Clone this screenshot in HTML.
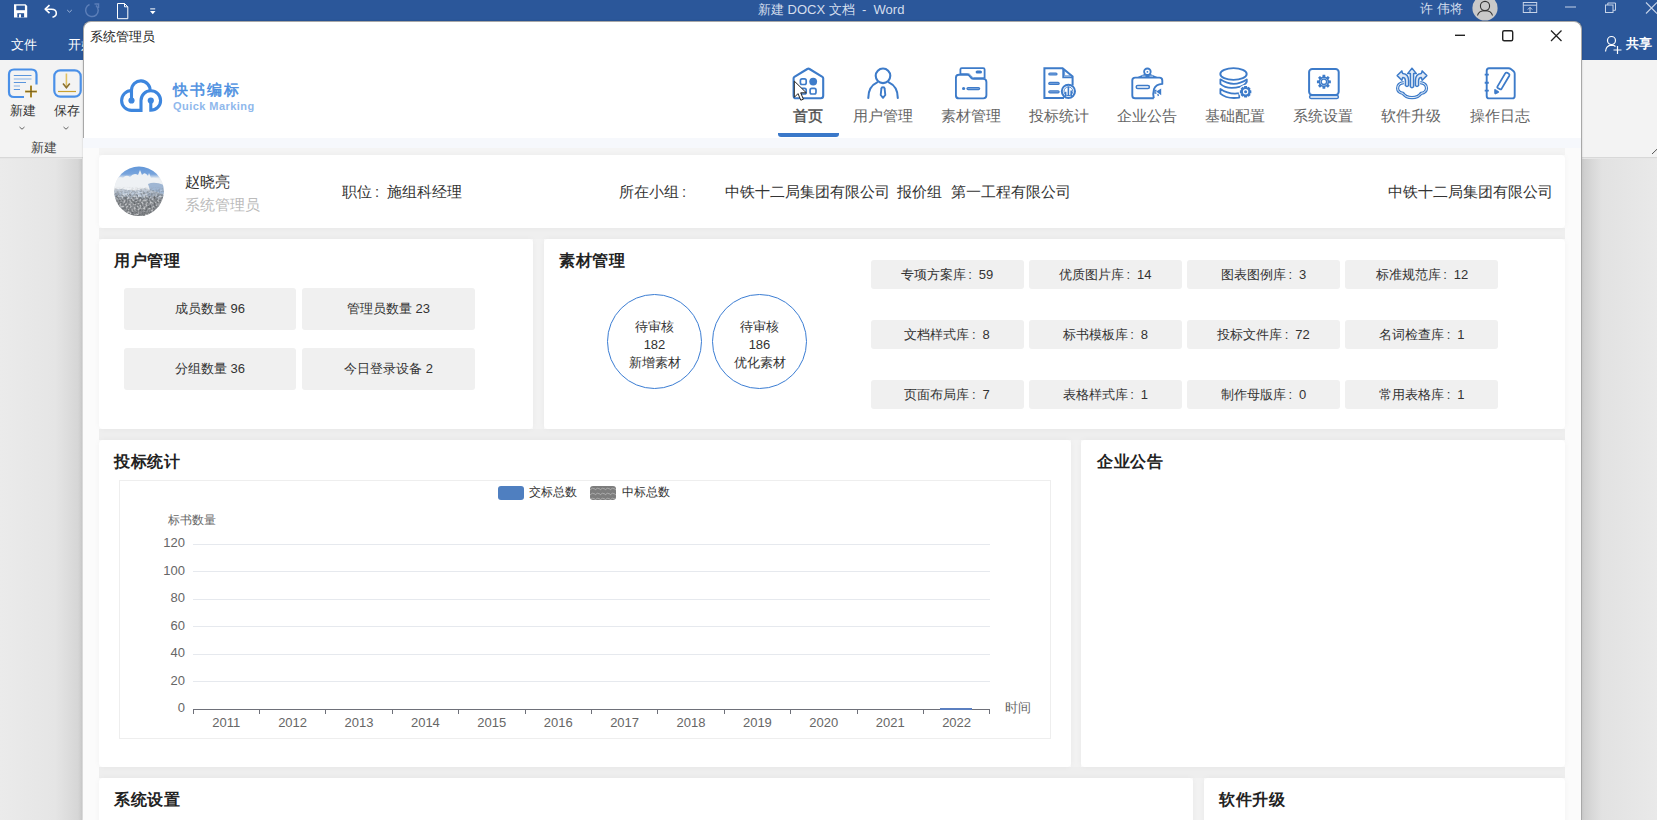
<!DOCTYPE html>
<html><head><meta charset="utf-8">
<style>
*{margin:0;padding:0;box-sizing:border-box}
html,body{width:1657px;height:820px;overflow:hidden;background:#e6e6e6;font-family:"Liberation Sans",sans-serif;position:relative}
.abs{position:absolute}
.t{position:absolute;white-space:nowrap;line-height:1}
.card{position:absolute;background:#fff;border-radius:4px;box-shadow:0 0 6px rgba(0,0,0,.04)}
.ttl{position:absolute;font-size:16px;font-weight:bold;color:#222;letter-spacing:0.6px;line-height:1;white-space:nowrap}
.cl{display:inline-block;text-align:left;width:13px;padding-left:2.5px}
.sb{position:absolute;background:#f0f0f0;border-radius:3px;font-size:13px;color:#333;text-align:center;white-space:nowrap}
</style></head><body>
<!-- word chrome -->
<div class="abs" style="left:0;top:0;width:1657px;height:60px;background:#2b579a"></div>
<div class="abs" style="left:0;top:60px;width:1657px;height:98px;background:#f3f3f3;border-bottom:1px solid #d8d8d8"></div>
<div class="abs" style="left:0;top:159px;width:1657px;height:661px;background:linear-gradient(90deg,#ebebeb 0,#e5e5e5 55px,#d6d6d6 78px,#c9c9c9 82px,#e6e6e6 82px,#e6e6e6 1581px,#cdcdcd 1583px,#d8d8d8 1592px,#e2e2e2 1602px,#e9e9e9 1657px)"></div>
<svg class="abs" style="left:0;top:0" width="170" height="22" viewBox="0 0 170 22">
<path d="M14 4.2 H25.5 L27.2 5.9 V17.4 H14 Z" fill="#fff"/>
<rect x="16.3" y="5.6" width="8.6" height="4.6" fill="#2b579a"/>
<rect x="17.3" y="13.2" width="6.8" height="4.2" fill="#2b579a"/>
<rect x="19" y="14.3" width="2" height="3.1" fill="#fff"/>
<path d="M49.5 5.2 L45.2 9.2 L49.5 13.2" fill="none" stroke="#fff" stroke-width="1.6" stroke-linejoin="round"/>
<path d="M45.5 9.2 H51.5 Q56.3 9.2 56.3 13.2 Q56.3 16.3 52.5 17.2" fill="none" stroke="#fff" stroke-width="1.6"/>
<path d="M67.2 10 L69.5 12.2 L71.8 10" fill="none" stroke="#9db4d8" stroke-width="1"/>
<path d="M96 5.5 A6.3 6.3 0 1 1 89.5 4.5" fill="none" stroke="#5b7eb8" stroke-width="1.5"/>
<path d="M94.5 4 H98.5 V8" fill="none" stroke="#5b7eb8" stroke-width="1.5"/>
<path d="M117.5 3.5 H124.5 L127.8 6.8 V18.7 H117.5 Z M124.5 3.5 V6.8 H127.8" fill="none" stroke="#fff" stroke-width="1"/>
<path d="M150.2 8.9 H155.2" stroke="#fff" stroke-width="1"/>
<path d="M150 11 H155.5 L152.75 14.2 Z" fill="#fff"/>
</svg>
<svg class="abs" style="left:1460px;top:0" width="197" height="22" viewBox="0 0 197 22">
<circle cx="25" cy="8" r="12.6" fill="#c9c9c9"/>
<circle cx="25" cy="6" r="4.6" fill="none" stroke="#333" stroke-width="1.1"/>
<path d="M17.5 15.5 Q18.5 10.8 25 10.8 Q31.5 10.8 32.5 15.5" fill="none" stroke="#333" stroke-width="1.1"/>
<rect x="63.3" y="2.5" width="13.4" height="10" fill="none" stroke="#c6d3e8" stroke-width="1"/>
<path d="M63.3 5.2 H76.7 M70 12.5 V7.5 M67.8 9.6 L70 7.3 L72.2 9.6" fill="none" stroke="#c6d3e8" stroke-width="1"/>
<path d="M105 7 H116" stroke="#c6d3e8" stroke-width="1"/>
<rect x="145.5" y="5" width="7.5" height="7.5" fill="none" stroke="#c6d3e8" stroke-width="1"/>
<path d="M147.8 5 V3 H155.5 V10.3 H153" fill="none" stroke="#c6d3e8" stroke-width="1"/>
<path d="M186 2.5 L197 13.5 M197 2.5 L186 13.5" stroke="#c6d3e8" stroke-width="1.1"/>
</svg>
<svg class="abs" style="left:1600px;top:33px" width="25" height="22" viewBox="0 0 25 22">
<circle cx="11.5" cy="7.5" r="4" fill="none" stroke="#fff" stroke-width="1.2"/>
<path d="M5.5 18.5 Q6 12.5 11.5 12.2 Q14 12.2 15.5 13.5" fill="none" stroke="#fff" stroke-width="1.2"/>
<path d="M17.5 13 V21 M13.5 17 H21.5" stroke="#fff" stroke-width="1.2"/>
</svg>
<svg class="abs" style="left:5px;top:65px" width="80" height="70" viewBox="0 0 80 70">
<path d="M31.5 19.5 V9.5 Q31.5 4.5 26.5 4.5 H9 Q4 4.5 4 9.5 V27 Q4 32 9 32 H19" fill="none" stroke="#4a90e8" stroke-width="2.2"/>
<path d="M8.8 10.5 H26.5 M8.8 17.5 H21 M8.8 24.5 H15" stroke="#5a95dc" stroke-width="1"/>
<path d="M8.8 14 H26.5 M8.8 21 H15" stroke="#aac8ec" stroke-width="1.5"/>
<path d="M20 26.6 H32 M26 20.5 V32.5" stroke="#c8a030" stroke-width="2"/>
<path d="M20.5 26.6 H31.5 M26 21 V32" stroke="#5a4a20" stroke-width="0.7"/>
<rect x="49.3" y="5.3" width="26.4" height="26.4" rx="6" fill="none" stroke="#4a90e8" stroke-width="2.2"/>
<path d="M61.4 8.5 V22.5" stroke="#e0c060" stroke-width="1.6"/>
<path d="M58 18.5 L61.4 22.8 L64.8 18.5" fill="none" stroke="#8a7030" stroke-width="1.6"/>
<path d="M53 26.5 H71" stroke="#c8a030" stroke-width="1.2"/>
<path d="M14.5 62 L17 64.2 L19.5 62 M58.5 62 L61 64.2 L63.5 62" fill="none" stroke="#555" stroke-width="0.9"/>
</svg>
<div class="t" style="left:758px;top:3px;font-size:13px;color:#d4deed">新建 DOCX 文档 &nbsp;- &nbsp;Word</div>
<div class="t" style="left:11px;top:38px;font-size:13px;color:#fff">文件</div>
<div class="t" style="left:68px;top:38px;font-size:13px;color:#fff">开始</div>
<div class="t" style="left:1626px;top:37px;font-size:13px;color:#fff;font-weight:bold">共享</div>
<div class="t" style="left:10px;top:104px;font-size:13px;color:#333">新建</div>
<div class="t" style="left:54px;top:104px;font-size:13px;color:#333">保存</div>
<div class="t" style="left:31px;top:141px;font-size:13px;color:#444">新建</div>
<div class="t" style="left:1420px;top:2px;font-size:13px;color:#d4deed">许 伟将</div>

<!-- dialog -->
<div class="abs" style="left:82.5px;top:21px;width:1499px;height:799px;background:#fff;border-radius:8px 8px 0 0;border:1px solid #a8a8a8;border-bottom:0;box-shadow:0 0 2px rgba(0,0,0,.2)"></div>
<div class="t" style="left:90px;top:31px;font-size:12.5px;color:#222">系统管理员</div>
<svg class="abs" style="left:1450px;top:27px" width="120" height="18" viewBox="0 0 120 18">
<path d="M5 8.3 H15" stroke="#222" stroke-width="1.4"/>
<rect x="52.7" y="3.7" width="10" height="10" rx="1.5" fill="none" stroke="#222" stroke-width="1.4"/>
<path d="M101 3.5 L111.5 14 M111.5 3.5 L101 14" stroke="#222" stroke-width="1.3"/>
</svg>
<svg class="abs" style="left:115px;top:74px" width="55" height="42" viewBox="0 0 55 42">
<g fill="none" stroke="#3d86de" stroke-width="3.1">
<path d="M16.5 26.5 V15.9 A9.3 9.3 0 0 1 35.1 16.5"/>
<path d="M16.5 16.6 A9.9 9.9 0 0 0 16.5 36.4 H26 V26.5 A9.8 9.8 0 1 1 35.8 36.3 V26.5"/>
</g>
<circle cx="16.5" cy="26.5" r="3.1" fill="#3d86de"/><circle cx="35.8" cy="26.5" r="3.1" fill="#3d86de"/>
</svg>
<div class="t" style="left:173px;top:82px;font-size:15px;color:#4a8ee0;-webkit-text-stroke:0.5px #4a8ee0;letter-spacing:2px">快书编标</div>
<div class="t" style="left:173px;top:101px;font-size:11px;color:#8fb8ec;letter-spacing:0.45px;font-weight:bold">Quick Marking</div>
<svg class="abs" style="left:792px;top:67px" width="33" height="33" viewBox="0 0 33 33"><path d="M1.6 11.2 Q1.6 10.4 2.4 9.9 L15.3 2 Q16.4 1.3 17.5 2 L30.4 9.9 Q31.2 10.4 31.2 11.2 V28.8 Q31.2 31.3 28.8 31.3 H4 Q1.6 31.3 1.6 28.8 Z" fill="none" stroke="#3d7bc9" stroke-width="2.1" stroke-linejoin="round"/>
<rect x="8.4" y="11.9" width="5.8" height="5.6" rx="1.7" fill="none" stroke="#3d7bc9" stroke-width="1.7"/>
<circle cx="21.2" cy="14.6" r="3.9" fill="#3d7bc9"/>
<rect x="8.4" y="21.4" width="5.8" height="5.6" rx="1.7" fill="none" stroke="#3d7bc9" stroke-width="1.7"/>
<rect x="18.1" y="21.4" width="5.9" height="5.6" rx="1.7" fill="none" stroke="#3d7bc9" stroke-width="1.7"/></svg>
<div class="t" style="left:708px;top:109px;width:200px;text-align:center;font-size:14.5px;color:#505050;-webkit-text-stroke:0.45px #505050">首页</div>
<svg class="abs" style="left:867px;top:67px" width="33" height="33" viewBox="0 0 33 33"><circle cx="16" cy="8.8" r="7.3" fill="none" stroke="#3d7bc9" stroke-width="2.1"/>
<path d="M1.3 31 C1.3 23.5 4.5 18 10.2 15.4 M21.8 15.4 C27.5 18 30.8 23.5 30.8 31" fill="none" stroke="#3d7bc9" stroke-width="2.1" stroke-linecap="round"/>
<path d="M14.4 21.4 Q14.4 20.3 16 20.3 Q17.6 20.3 17.6 21.4 L18.3 28 L16 30.8 L13.7 28 Z" fill="none" stroke="#3d7bc9" stroke-width="1.9" stroke-linejoin="round"/></svg>
<div class="t" style="left:783px;top:109px;width:200px;text-align:center;font-size:14.5px;color:#666">用户管理</div>
<svg class="abs" style="left:955px;top:67px" width="33" height="33" viewBox="0 0 33 33"><path d="M5.4 8 V2.6 Q5.4 1.2 6.8 1.2 H28.2 Q29.6 1.2 29.6 2.6 V11.5" fill="none" stroke="#3d7bc9" stroke-width="1.8"/>
<rect x="20.6" y="3.4" width="6.4" height="3.2" rx="1.6" fill="#3d7bc9"/>
<path d="M0.9 11 Q0.9 7.8 4 7.8 H12.5 Q13.8 7.8 15 9.5 L16.2 10.9 Q17 11.9 18.5 11.9 H28.2 Q31.4 11.9 31.4 15 V28.3 Q31.4 31.4 28.3 31.4 H4 Q0.9 31.4 0.9 28.3 Z" fill="none" stroke="#3d7bc9" stroke-width="1.9"/>
<path d="M5.6 6.6 H12.8 Q14.5 6.6 15.8 8.4 L17 10 Q17.6 10.6 18.6 10.6 H29" fill="none" stroke="#3d7bc9" stroke-width="0.8"/>
<circle cx="8.6" cy="21.5" r="1.6" fill="#3d7bc9"/>
<rect x="11.4" y="19.9" width="13.8" height="3.3" rx="1.65" fill="#3d7bc9"/>
<path d="M12.8 21.5 H23.8" stroke="#8fb3e3" stroke-width="0.7"/></svg>
<div class="t" style="left:871px;top:109px;width:200px;text-align:center;font-size:14.5px;color:#666">素材管理</div>
<svg class="abs" style="left:1043px;top:67px" width="33" height="33" viewBox="0 0 33 33"><path d="M21 31 H1.4 V1.2 H19.6 L29.6 9.4 V18.5" fill="none" stroke="#3d7bc9" stroke-width="2" stroke-linejoin="miter"/>
<path d="M20.2 1.8 V10.3 H29.2" fill="none" stroke="#3d7bc9" stroke-width="1.8"/>
<path d="M21.6 3.5 V8.8 H27" fill="none" stroke="#3d7bc9" stroke-width="0.8"/>
<rect x="5.2" y="5.4" width="9.4" height="3.2" rx="1.6" fill="#3d7bc9"/>
<rect x="5.2" y="14.8" width="11.5" height="3.2" rx="1.6" fill="#3d7bc9"/>
<rect x="5.2" y="23.2" width="11.5" height="3.2" rx="1.6" fill="#3d7bc9"/>
<path d="M6.5 7 H13.5 M6.5 16.4 H15.5 M6.5 24.8 H15.5" stroke="#8fb3e3" stroke-width="0.7"/>
<circle cx="25.4" cy="24.3" r="7.4" fill="#fff"/>
<circle cx="25.4" cy="24.3" r="6.6" fill="none" stroke="#3d7bc9" stroke-width="2"/>
<circle cx="25.4" cy="24.3" r="4.4" fill="none" stroke="#3d7bc9" stroke-width="0.9"/>
<path d="M22.6 29 V24.8 M25.4 29 V19.6 M28.2 29 V23.6" stroke="#3d7bc9" stroke-width="1.6"/></svg>
<div class="t" style="left:959px;top:109px;width:200px;text-align:center;font-size:14.5px;color:#666">投标统计</div>
<svg class="abs" style="left:1131px;top:67px" width="33" height="33" viewBox="0 0 33 33"><circle cx="16.4" cy="4.8" r="3.3" fill="none" stroke="#3d7bc9" stroke-width="1.8"/>
<circle cx="16.4" cy="4.8" r="0.9" fill="#3d7bc9"/>
<path d="M13.4 7 L5.5 10.6 H27.5 L19.4 7 Z" fill="#3d7bc9"/>
<path d="M11 9.2 H14.5 M18.5 9.2 H22" stroke="#fff" stroke-width="0.8"/>
<path d="M22.8 31.3 H4.2 Q1.3 31.3 1.3 28.4 V13.4 Q1.3 10.6 4.2 10.6 H28.4 Q31.3 10.6 31.3 13.4 V16.9 Q25 17.2 23 22 Q21.6 27 22.8 31.3" fill="none" stroke="#3d7bc9" stroke-width="1.9" stroke-linejoin="round"/>
<rect x="5.2" y="18.6" width="13.2" height="3" rx="1.5" fill="none" stroke="#3d7bc9" stroke-width="1.5"/>
<path d="M25.2 24.6 L30.2 21.6 V28.2 Z" fill="#3d7bc9"/>
<path d="M25.5 23.5 H24 V26.2 H25.5 M26.8 26.8 L27.4 29" stroke="#3d7bc9" stroke-width="1.3" fill="none"/></svg>
<div class="t" style="left:1047px;top:109px;width:200px;text-align:center;font-size:14.5px;color:#666">企业公告</div>
<svg class="abs" style="left:1219px;top:67px" width="33" height="33" viewBox="0 0 33 33"><ellipse cx="14.5" cy="7" rx="13.2" ry="5.9" fill="none" stroke="#3d7bc9" stroke-width="1.9"/>
<path d="M1.4 12.3 Q14.6 21.2 27.8 12.5 V14.8 Q26 18.3 21.5 19.6 Q8 23.2 1.4 16.9 Z" fill="none" stroke="#3d7bc9" stroke-width="1.8" stroke-linejoin="round"/>
<path d="M1.4 21.9 Q10 27.8 20.3 26.2 V30.6 Q8 32.3 1.4 26.6 Z" fill="none" stroke="#3d7bc9" stroke-width="1.8" stroke-linejoin="round"/>
<circle cx="26.6" cy="24.8" r="7" fill="#fff"/>
<path d="M32.34 23.42 L32.34 26.18 L30.99 26.49 L30.90 26.70 L31.63 27.88 L29.68 29.83 L28.50 29.10 L28.29 29.19 L27.98 30.54 L25.22 30.54 L24.91 29.19 L24.70 29.10 L23.52 29.83 L21.57 27.88 L22.30 26.70 L22.21 26.49 L20.86 26.18 L20.86 23.42 L22.21 23.11 L22.30 22.90 L21.57 21.72 L23.52 19.77 L24.70 20.50 L24.91 20.41 L25.22 19.06 L27.98 19.06 L28.29 20.41 L28.50 20.50 L29.68 19.77 L31.63 21.72 L30.90 22.90 L30.99 23.11 Z" fill="#3d7bc9"/>
<circle cx="26.6" cy="24.8" r="2.7" fill="#fff"/><circle cx="26.6" cy="24.8" r="1.5" fill="#3d7bc9"/></svg>
<div class="t" style="left:1135px;top:109px;width:200px;text-align:center;font-size:14.5px;color:#666">基础配置</div>
<svg class="abs" style="left:1307px;top:67px" width="33" height="33" viewBox="0 0 33 33"><rect x="2.1" y="1.9" width="29.6" height="26" rx="3.2" fill="none" stroke="#3d7bc9" stroke-width="2"/>
<rect x="2.6" y="28.6" width="28.8" height="2.8" rx="1.4" fill="none" stroke="#3d7bc9" stroke-width="1.5"/>
<path d="M23.87 13.47 L23.87 16.13 L21.88 16.31 L21.49 17.25 L22.77 18.79 L20.89 20.67 L19.35 19.39 L18.41 19.78 L18.23 21.77 L15.57 21.77 L15.39 19.78 L14.45 19.39 L12.91 20.67 L11.03 18.79 L12.31 17.25 L11.92 16.31 L9.93 16.13 L9.93 13.47 L11.92 13.29 L12.31 12.35 L11.03 10.81 L12.91 8.93 L14.45 10.21 L15.39 9.82 L15.57 7.83 L18.23 7.83 L18.41 9.82 L19.35 10.21 L20.89 8.93 L22.77 10.81 L21.49 12.35 L21.88 13.29 Z" fill="#3d7bc9"/>
<circle cx="16.9" cy="14.8" r="3.6" fill="#fff"/><circle cx="16.9" cy="14.8" r="2.7" fill="none" stroke="#3d7bc9" stroke-width="1.3"/></svg>
<div class="t" style="left:1223px;top:109px;width:200px;text-align:center;font-size:14.5px;color:#666">系统设置</div>
<svg class="abs" style="left:1396px;top:67px" width="33" height="33" viewBox="0 0 33 33"><path d="M7.8 15.6 Q1.6 16.2 1.6 21.3 Q1.7 25.5 7 26.4 Q9.5 30.6 16 30.6 Q22.5 30.6 25 26.4 Q30.4 25.5 30.5 21.2 Q30.5 16.3 24.2 15.6" fill="none" stroke="#3d7bc9" stroke-width="3.2"/>
<path d="M7.8 15.6 Q1.6 16.2 1.6 21.3 Q1.7 25.5 7 26.4 Q9.5 30.6 16 30.6 Q22.5 30.6 25 26.4 Q30.4 25.5 30.5 21.2 Q30.5 16.3 24.2 15.6" fill="none" stroke="#fff" stroke-width="0.9"/>
<path d="M16 1.2 L11.6 6.6 H14.4 V19.8 Q16 21.6 17.6 19.8 V6.6 H20.4 Z" fill="#dfe9f6" stroke="#3d7bc9" stroke-width="1.5" stroke-linejoin="round"/>
<path d="M1.2 8.6 L5.8 3.9 L6.7 6.6 Q12.6 7.2 12.6 13.5 V18.6 Q11 20.3 9.4 18.6 V13.5 Q9.4 10.4 6.7 10.4 L5.8 13.2 Z" fill="#dfe9f6" stroke="#3d7bc9" stroke-width="1.5" stroke-linejoin="round"/>
<path d="M30.8 8.6 L26.2 3.9 L25.3 6.6 Q19.4 7.2 19.4 13.5 V18.6 Q21 20.3 22.6 18.6 V13.5 Q22.6 10.4 25.3 10.4 L26.2 13.2 Z" fill="#dfe9f6" stroke="#3d7bc9" stroke-width="1.5" stroke-linejoin="round"/></svg>
<div class="t" style="left:1311px;top:109px;width:200px;text-align:center;font-size:14.5px;color:#666">软件升级</div>
<svg class="abs" style="left:1484px;top:67px" width="33" height="33" viewBox="0 0 33 33"><path d="M5 1.3 H24.5 Q26 1.3 27.2 2.2 L29.6 4.2 Q30.7 5.2 30.7 6.8 V28.9 Q30.7 31.4 28.2 31.4 H5.2 Q2.7 31.4 2.7 28.9 V3.8 Q2.7 1.3 5 1.3 Z" fill="none" stroke="#3d7bc9" stroke-width="1.9" stroke-linejoin="round"/>
<path d="M0.7 7.6 H4.8 M0.7 15.7 H4.8 M0.7 23.6 H4.8" stroke="#3d7bc9" stroke-width="1.9"/>
<path d="M13.4 19.6 L21.2 6.4 Q22 5.2 23.3 5.8 L24.8 6.7 Q25.9 7.5 25.3 8.7 L17.5 21.9 Q16.9 22.7 16 22.3 L13.8 21 Q13 20.5 13.4 19.6 Z" fill="none" stroke="#3d7bc9" stroke-width="1.8" stroke-linejoin="round"/>
<path d="M10.6 23.2 Q10.3 22.3 11.1 22.4 L14.6 24.6 Q15.1 25.1 14.5 25.5 L11.5 26.9 Q10.7 27.2 10.7 26.3 Z" fill="#3d7bc9" stroke="#3d7bc9" stroke-width="0.8"/></svg>
<div class="t" style="left:1400px;top:109px;width:200px;text-align:center;font-size:14.5px;color:#666">操作日志</div>
<div class="abs" style="left:778px;top:133px;width:61px;height:4px;background:#3a78c9;border-radius:0 0 3px 3px"></div>
<svg class="abs" style="left:793px;top:80px" width="16" height="22" viewBox="0 0 16 22"><path d="M1.3 1.1 V17.3 L5 13.6 L7.8 20.2 L10.4 19.2 L7.7 12.8 H13.3 Z" fill="#fff" stroke="#222" stroke-width="1" stroke-linejoin="round"/></svg>

<!-- content bg -->
<div class="abs" style="left:83px;top:138px;width:1498px;height:682px;background:#fbfbfb"></div>
<div class="abs" style="left:83px;top:138px;width:1498px;height:10px;background:#f6f8fc"></div>
<div class="abs" style="left:99px;top:148px;width:1466px;height:7px;background:#f4f4f4"></div>
<div class="abs" style="left:99px;top:228px;width:1466px;height:11px;background:#efefef"></div>
<div class="abs" style="left:99px;top:429px;width:1466px;height:11px;background:#eeeeee"></div>
<div class="abs" style="left:99px;top:767px;width:1466px;height:11px;background:#eeeeee"></div>
<div class="abs" style="left:533px;top:239px;width:11px;height:190px;background:#f2f2f2"></div>
<div class="abs" style="left:1071px;top:440px;width:10px;height:327px;background:#f2f2f2"></div>
<div class="abs" style="left:1193px;top:778px;width:11px;height:42px;background:#f2f2f2"></div>

<div class="card" style="left:99px;top:155px;width:1466px;height:73px"></div>
<svg class="abs" style="left:114px;top:166px" width="50" height="51" viewBox="0 0 50 51">
<defs><clipPath id="av"><circle cx="25" cy="25.3" r="24.8"/></clipPath>
<linearGradient id="avg" x1="0" y1="0" x2="0" y2="1">
<stop offset="0" stop-color="#6196d8"/><stop offset="0.16" stop-color="#78a4dc"/><stop offset="0.24" stop-color="#e9edf1"/>
<stop offset="0.42" stop-color="#dde3ea"/><stop offset="0.55" stop-color="#9dabbd"/><stop offset="0.68" stop-color="#8a8e93"/>
<stop offset="1" stop-color="#7e8185"/></linearGradient>
<filter id="avd" x="0" y="0" width="1" height="1"><feTurbulence type="fractalNoise" baseFrequency="0.45" numOctaves="2" seed="7"/>
<feColorMatrix values="0 0 0 0 0.12  0 0 0 0 0.13  0 0 0 0 0.14  0 0 0 2.6 -0.95"/></filter>
<filter id="avw" x="0" y="0" width="1" height="1"><feTurbulence type="fractalNoise" baseFrequency="0.5" numOctaves="2" seed="11"/>
<feColorMatrix values="0 0 0 0 1  0 0 0 0 1  0 0 0 0 1  0 0 0 2.2 -0.95"/></filter>
<linearGradient id="avm" x1="0" y1="0" x2="0" y2="1"><stop offset="0.4" stop-color="#fff" stop-opacity="0"/><stop offset="0.62" stop-color="#fff" stop-opacity="1"/></linearGradient>
<mask id="avmask"><rect width="50" height="51" fill="url(#avm)"/></mask>
</defs>
<g clip-path="url(#av)">
<rect width="50" height="51" fill="url(#avg)"/>
<path d="M0 14 Q5 10 9 12 Q12 8 16 11 Q20 6 24 9 L26 4 L28 9 Q31 5 34 10 L35 7 L37 12 Q42 11 46 14 L50 15 V22 Q40 26 30 22 Q20 27 10 23 Q4 22 0 24 Z" fill="#eef1f4"/>
<path d="M34 18 Q40 15 50 19 V28 Q42 26 36 24 Z" fill="#9fb6d3"/>
<path d="M6 26 Q14 22 22 26 Q28 23 33 27 V31 Q20 30 6 31 Z" fill="#b9c6d6"/>
<rect width="50" height="51" filter="url(#avd)" mask="url(#avmask)"/>
<rect width="50" height="51" filter="url(#avw)" mask="url(#avmask)" opacity="0.8"/>
</g></svg>
<div class="t" style="left:185px;top:175px;font-size:14.7px;color:#333">赵晓亮</div>
<div class="t" style="left:185px;top:198px;font-size:14.7px;color:#bbb">系统管理员</div>
<div class="t" style="left:342px;top:185px;font-size:14.7px;color:#333">职位<span class="cl" style="width:15px;padding-left:3px">:</span>施组科经理</div>
<div class="t" style="left:619px;top:185px;font-size:14.7px;color:#333">所在小组<span class="cl" style="width:15px;padding-left:3px">:</span></div>
<div class="t" style="left:725px;top:185px;font-size:14.7px;color:#333">中铁十二局集团有限公司</div>
<div class="t" style="left:897px;top:185px;font-size:14.7px;color:#333">报价组</div>
<div class="t" style="left:951px;top:185px;font-size:14.7px;color:#333">第一工程有限公司</div>
<div class="t" style="left:1388px;top:185px;font-size:14.7px;color:#333">中铁十二局集团有限公司</div>

<div class="card" style="left:99px;top:239px;width:434px;height:190px"></div>
<div class="ttl" style="left:114px;top:253px">用户管理</div>
<div class="sb" style="left:124px;top:288px;width:172px;height:42px;line-height:42px">成员数量 96</div>
<div class="sb" style="left:302px;top:288px;width:173px;height:42px;line-height:42px">管理员数量 23</div>
<div class="sb" style="left:124px;top:348px;width:172px;height:42px;line-height:42px">分组数量 36</div>
<div class="sb" style="left:302px;top:348px;width:173px;height:42px;line-height:42px">今日登录设备 2</div>

<div class="card" style="left:544px;top:239px;width:1021px;height:190px"></div>
<div class="ttl" style="left:559px;top:253px">素材管理</div>
<div class="abs" style="left:607px;top:294px;width:95px;height:95px;border:1.5px solid #3b7dd3;border-radius:50%"></div>
<div class="abs" style="left:712px;top:294px;width:95px;height:95px;border:1.5px solid #3b7dd3;border-radius:50%"></div>
<div class="t" style="left:607px;top:318px;width:95px;text-align:center;font-size:13px;color:#333;line-height:18px;white-space:normal">待审核<br>182<br>新增素材</div>
<div class="t" style="left:712px;top:318px;width:95px;text-align:center;font-size:13px;color:#333;line-height:18px;white-space:normal">待审核<br>186<br>优化素材</div>
<div class="sb" style="left:870.5px;top:260.0px;width:153px;height:29px;line-height:29px">专项方案库<span class="cl">:</span>59</div>
<div class="sb" style="left:1028.8px;top:260.0px;width:153px;height:29px;line-height:29px">优质图片库<span class="cl">:</span>14</div>
<div class="sb" style="left:1187.1px;top:260.0px;width:153px;height:29px;line-height:29px">图表图例库<span class="cl">:</span>3</div>
<div class="sb" style="left:1345.4px;top:260.0px;width:153px;height:29px;line-height:29px">标准规范库<span class="cl">:</span>12</div>
<div class="sb" style="left:870.5px;top:320.2px;width:153px;height:29px;line-height:29px">文档样式库<span class="cl">:</span>8</div>
<div class="sb" style="left:1028.8px;top:320.2px;width:153px;height:29px;line-height:29px">标书模板库<span class="cl">:</span>8</div>
<div class="sb" style="left:1187.1px;top:320.2px;width:153px;height:29px;line-height:29px">投标文件库<span class="cl">:</span>72</div>
<div class="sb" style="left:1345.4px;top:320.2px;width:153px;height:29px;line-height:29px">名词检查库<span class="cl">:</span>1</div>
<div class="sb" style="left:870.5px;top:380.4px;width:153px;height:29px;line-height:29px">页面布局库<span class="cl">:</span>7</div>
<div class="sb" style="left:1028.8px;top:380.4px;width:153px;height:29px;line-height:29px">表格样式库<span class="cl">:</span>1</div>
<div class="sb" style="left:1187.1px;top:380.4px;width:153px;height:29px;line-height:29px">制作母版库<span class="cl">:</span>0</div>
<div class="sb" style="left:1345.4px;top:380.4px;width:153px;height:29px;line-height:29px">常用表格库<span class="cl">:</span>1</div>


<div class="card" style="left:99px;top:440px;width:972px;height:327px"></div>
<div class="ttl" style="left:114px;top:454px">投标统计</div>
<div class="abs" style="left:193px;top:543.5px;width:797px;height:1px;background:#e6e9ee"></div>
<div class="t" style="left:120px;top:536px;width:65px;text-align:right;font-size:13px;color:#666">120</div>
<div class="abs" style="left:193px;top:571.0px;width:797px;height:1px;background:#e6e9ee"></div>
<div class="t" style="left:120px;top:563.5px;width:65px;text-align:right;font-size:13px;color:#666">100</div>
<div class="abs" style="left:193px;top:598.5px;width:797px;height:1px;background:#e6e9ee"></div>
<div class="t" style="left:120px;top:591px;width:65px;text-align:right;font-size:13px;color:#666">80</div>
<div class="abs" style="left:193px;top:626.0px;width:797px;height:1px;background:#e6e9ee"></div>
<div class="t" style="left:120px;top:618.5px;width:65px;text-align:right;font-size:13px;color:#666">60</div>
<div class="abs" style="left:193px;top:653.5px;width:797px;height:1px;background:#e6e9ee"></div>
<div class="t" style="left:120px;top:646px;width:65px;text-align:right;font-size:13px;color:#666">40</div>
<div class="abs" style="left:193px;top:681.0px;width:797px;height:1px;background:#e6e9ee"></div>
<div class="t" style="left:120px;top:673.5px;width:65px;text-align:right;font-size:13px;color:#666">20</div>
<div class="t" style="left:120px;top:701px;width:65px;text-align:right;font-size:13px;color:#666">0</div>
<div class="abs" style="left:193px;top:708.5px;width:797px;height:1px;background:#6e7079"></div>
<div class="abs" style="left:192.5px;top:709px;width:1px;height:5px;background:#6e7079"></div>
<div class="abs" style="left:258.9px;top:709px;width:1px;height:5px;background:#6e7079"></div>
<div class="abs" style="left:325.3px;top:709px;width:1px;height:5px;background:#6e7079"></div>
<div class="abs" style="left:391.7px;top:709px;width:1px;height:5px;background:#6e7079"></div>
<div class="abs" style="left:458.1px;top:709px;width:1px;height:5px;background:#6e7079"></div>
<div class="abs" style="left:524.5px;top:709px;width:1px;height:5px;background:#6e7079"></div>
<div class="abs" style="left:590.9px;top:709px;width:1px;height:5px;background:#6e7079"></div>
<div class="abs" style="left:657.3px;top:709px;width:1px;height:5px;background:#6e7079"></div>
<div class="abs" style="left:723.7px;top:709px;width:1px;height:5px;background:#6e7079"></div>
<div class="abs" style="left:790.1px;top:709px;width:1px;height:5px;background:#6e7079"></div>
<div class="abs" style="left:856.5px;top:709px;width:1px;height:5px;background:#6e7079"></div>
<div class="abs" style="left:922.9px;top:709px;width:1px;height:5px;background:#6e7079"></div>
<div class="abs" style="left:989.3px;top:709px;width:1px;height:5px;background:#6e7079"></div>
<div class="t" style="left:196.2px;top:716px;width:60px;text-align:center;font-size:13px;color:#666">2011</div>
<div class="t" style="left:262.6px;top:716px;width:60px;text-align:center;font-size:13px;color:#666">2012</div>
<div class="t" style="left:329.0px;top:716px;width:60px;text-align:center;font-size:13px;color:#666">2013</div>
<div class="t" style="left:395.4px;top:716px;width:60px;text-align:center;font-size:13px;color:#666">2014</div>
<div class="t" style="left:461.8px;top:716px;width:60px;text-align:center;font-size:13px;color:#666">2015</div>
<div class="t" style="left:528.2px;top:716px;width:60px;text-align:center;font-size:13px;color:#666">2016</div>
<div class="t" style="left:594.6px;top:716px;width:60px;text-align:center;font-size:13px;color:#666">2017</div>
<div class="t" style="left:661.0px;top:716px;width:60px;text-align:center;font-size:13px;color:#666">2018</div>
<div class="t" style="left:727.4px;top:716px;width:60px;text-align:center;font-size:13px;color:#666">2019</div>
<div class="t" style="left:793.8px;top:716px;width:60px;text-align:center;font-size:13px;color:#666">2020</div>
<div class="t" style="left:860.2px;top:716px;width:60px;text-align:center;font-size:13px;color:#666">2021</div>
<div class="t" style="left:926.6px;top:716px;width:60px;text-align:center;font-size:13px;color:#666">2022</div>
<div class="abs" style="left:940px;top:707.5px;width:32px;height:2px;background:#5b7fc0"></div>
<div class="t" style="left:1005px;top:702px;font-size:12.5px;color:#666">时间</div>
<div class="t" style="left:168px;top:514px;font-size:12px;color:#666">标书数量</div>
<div class="abs" style="left:498px;top:486px;width:26px;height:14px;border-radius:3px;background:#4f7fc0"></div>
<div class="t" style="left:529px;top:486px;font-size:12px;color:#333">交标总数</div>
<svg class="abs" style="left:590px;top:486px" width="26" height="14" viewBox="0 0 26 14"><defs><pattern id="lp" width="5" height="5" patternUnits="userSpaceOnUse"><rect width="5" height="5" fill="#7d7d7d"/><path d="M0 4 Q2 1 5 3" stroke="#b5b5b5" stroke-width="0.8" fill="none"/></pattern></defs><rect width="26" height="14" rx="3" fill="url(#lp)"/></svg>
<div class="t" style="left:622px;top:486px;font-size:12px;color:#333">中标总数</div>
<div class="abs" style="left:119px;top:480px;width:932px;height:259px;border:1px solid #eeeeee"></div>

<div class="card" style="left:1081px;top:440px;width:484px;height:327px"></div>
<div class="ttl" style="left:1097px;top:454px">企业公告</div>
<div class="card" style="left:99px;top:778px;width:1094px;height:60px"></div>
<div class="ttl" style="left:114px;top:792px">系统设置</div>
<div class="card" style="left:1204px;top:778px;width:361px;height:60px"></div>
<div class="ttl" style="left:1219px;top:792px">软件升级</div>
<svg class="abs" style="left:1645px;top:145px" width="12" height="12" viewBox="0 0 12 12"><path d="M7 9 L12 4.2" stroke="#555" stroke-width="1"/></svg>
</body></html>
